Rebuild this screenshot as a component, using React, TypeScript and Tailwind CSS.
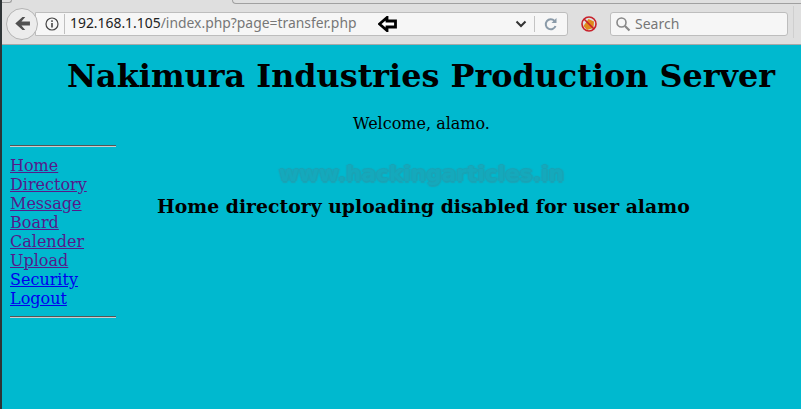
export default function App() {
  const links: [string, boolean][] = [
    ["Home", true], ["Directory", true], ["Message", true], ["Board", true],
    ["Calender", true], ["Upload", true], ["Security", false], ["Logout", false],
  ];
  return (
    <div className="relative flex h-[409px] w-[801px] flex-col overflow-hidden border-l-2 border-[#2e3436] bg-[#00b9cf] font-['DejaVu_Serif',serif] text-black">
      <div className="relative flex h-[45px] shrink-0 items-center border-b border-[#a8a8a8] bg-[#dfdfdf] pl-[4px] pt-[3px] font-['Noto_Sans',sans-serif]">
        <div className="absolute left-0 top-0 h-[3px] w-[10px] rounded-br-[6px] border-b border-r border-[#a0a0a0]" />
        <div className="absolute left-[230px] right-0 top-0 h-[4px] rounded-bl-[8px] border-b border-l border-[#a0a0a0]" />
        <div className="absolute bottom-[6px] right-[7px] top-[6px] w-px bg-[#cfcfcf]" />
        <div className="z-10 flex h-[32px] w-[32px] shrink-0 items-center justify-center rounded-full border border-[#b4b4b4] bg-[#ececec]">
          <svg width="17" height="17" viewBox="0 0 16 16"><path d="M8 1.800 1.200 8 8 14.200h2.600L7 9.800H15V6.200H7l3.600-4.400z" fill="#505050"/></svg>
        </div>
        <div className="-ml-[3px] flex h-[24px] w-[533px] shrink-0 items-center rounded-r-[3px] border border-[#bdbdbd] bg-[#f6f6f6] pl-[9px] text-[13.9px]">
          <svg width="14" height="14" viewBox="0 0 14 14" className="shrink-0"><circle cx="7" cy="7" r="6" fill="none" stroke="#444" strokeWidth="1.2"/><rect x="6.200" y="6" width="1.600" height="4.500" fill="#444"/><rect x="6.200" y="3.300" width="1.600" height="1.600" fill="#444"/></svg>
          <div className="ml-[5px] mr-[5px] h-[20px] w-px bg-[#c0c0c0]" />
          <span className="text-[#222]">192.168.1.105</span><span className="text-[#777]">/index.php?page=transfer.php</span>
          <svg width="20" height="16" viewBox="0 0 20 16" className="ml-[21px] shrink-0"><path d="M9 1.500 1.500 8 9 14.500V11h8.500V5H9z" fill="#fff" stroke="#000" strokeWidth="2.800"/></svg>
          <div className="flex-1" />
          <svg width="12" height="8" viewBox="0 0 12 8"><path d="M1.500 1.500 6 6l4.500-4.500" fill="none" stroke="#333" strokeWidth="2"/></svg>
          <div className="ml-[7px] h-[16px] w-px bg-[#c4c4c4]" />
          <svg width="14" height="14" viewBox="0 0 14 14" className="ml-[9px] mr-[9px]"><path d="M11.500 9a5 5 0 1 1-1-5" fill="none" stroke="#8a9aa8" strokeWidth="2"/><path d="M7.500 6h5V1z" fill="#8a9aa8"/></svg>
        </div>
        <svg width="18" height="18" viewBox="0 0 18 18" className="ml-[12px] shrink-0"><path d="M3.500 11 8.500 4l5.500 2.500-.5 6.500-6.500 2z" fill="#e08a1c"/><circle cx="9" cy="9" r="7" fill="none" stroke="#c8202a" strokeWidth="1.600"/><path d="M4 4 14 14" stroke="#c8202a" strokeWidth="1.600"/></svg>
        <div className="ml-[12px] flex h-[24px] w-[178px] shrink-0 items-center rounded-[3px] border border-[#bdbdbd] bg-[#f6f6f6] pl-[4px] text-[14px] text-[#777]">
          <svg width="16" height="16" viewBox="0 0 16 16"><circle cx="6.500" cy="6.500" r="4.500" fill="none" stroke="#888" strokeWidth="1.600"/><path d="M10 10l4.500 4.500" stroke="#888" strokeWidth="2.200"/></svg>
          <span className="ml-[4px]">Search</span>
        </div>
      </div>
      <div className="relative flex flex-1 flex-col">
        <h1 className="ml-[65px] mt-[10px] whitespace-nowrap text-[31.85px] font-bold leading-[42px]">Nakimura Industries Production Server</h1>
        <p className="ml-[351px] mt-[17px] text-[16px] leading-[19px]">Welcome, alamo.</p>
        <div className="mt-[12px] flex">
          <div className="ml-[8px] w-[106px]">
            <div className="border-b border-t border-b-[#ccc] border-t-[#555]" />
            <div className="mt-[9px] flex flex-col text-[16px] leading-[19px]">
              {links.map(([t, v]) => (
                <a key={t} href="#" className={v ? "text-[#551a8b] underline" : "text-[#0000ee] underline"}>{t}</a>
              ))}
            </div>
            <div className="mt-[8px] border-b border-t border-b-[#ccc] border-t-[#555]" />
          </div>
          <h3 className="ml-[41px] mt-[49px] h-[24px] whitespace-nowrap text-[18.84px] font-bold leading-[24px]">Home directory uploading disabled for user alamo</h3>
        </div>
        <div className="absolute left-[277px] top-[114px] whitespace-nowrap font-['DejaVu_Sans',sans-serif] text-[21.7px] font-bold leading-[30px] text-[#14a9bc] [text-shadow:1.5px_0_1px_#1ba3b5,-1.5px_0_1px_#1ba3b5,0_1.5px_1px_#1ba3b5,0_-1.5px_1px_#1ba3b5]">www.hackingarticles.in</div>
      </div>
    </div>
  );
}
